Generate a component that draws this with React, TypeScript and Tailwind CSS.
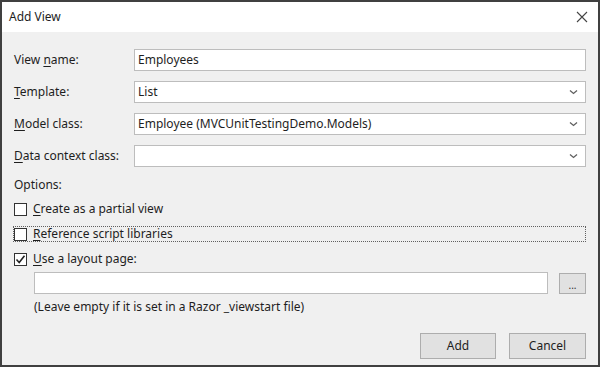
import React from 'react';

const font = { fontFamily: '"Segoe UI", "Noto Sans", "Open Sans", sans-serif' };

const Chevron = () => (
  <svg width="9" height="6" viewBox="0 0 9 6" className="text-[#606060]">
    <path d="M1 1.5 L4.5 4.5 L8 1.5" fill="none" stroke="currentColor" strokeWidth="1.3" />
  </svg>
);

const Field: React.FC<{ value?: string; select?: boolean }> = ({ value, select }) => (
  <div className="flex h-[22px] flex-1 items-center justify-between border border-[#bdbdbd] bg-white pl-[3px] pr-[7px] text-[12px] text-[#1e1e1e]">
    <span>{value}</span>
    {select && <Chevron />}
  </div>
);

const Row: React.FC<{ pre?: string; key1: string; post: string; value?: string; select?: boolean }> = ({ pre, key1, post, value, select }) => (
  <div className="flex items-center">
    <div className="w-[120px] text-[12px] text-[#1e1e1e]">
      {pre}
      <span className="underline underline-offset-2">{key1}</span>
      {post}
    </div>
    <Field value={value} select={select} />
  </div>
);

const Check: React.FC<{ checked?: boolean; key1: string; post: string; focused?: boolean }> = ({ checked, key1, post, focused }) => (
  <div className={`flex h-[16px] items-center gap-[6px] ${focused ? 'border border-dotted border-[#606060] -ml-px' : ''}`}>
    <div className="flex h-[13px] w-[13px] items-center justify-center border border-[#333] bg-white">
      {checked && (
        <svg width="11" height="11" viewBox="0 0 11 11">
          <path d="M1.5 5.5 L4.2 8.5 L9.5 1.8" fill="none" stroke="#222" strokeWidth="1.6" />
        </svg>
      )}
    </div>
    <span className="text-[12px] text-[#1e1e1e]">
      <span className="underline underline-offset-2">{key1}</span>
      {post}
    </span>
  </div>
);

export default function App() {
  return (
    <div style={font} className="flex h-[367px] w-[600px] flex-col border-2 border-[#404040] bg-[#f0f0f0]">
      <div className="flex h-[30px] items-center justify-between bg-white pl-[7px] pr-[10px]">
        <span className="text-[12px] text-[#1e1e1e]">Add View</span>
        <svg width="12" height="12" viewBox="0 0 12 12">
          <path d="M1 1 L11 11 M11 1 L1 11" stroke="#444" strokeWidth="1.1" />
        </svg>
      </div>
      <div className="flex flex-1 flex-col px-[12px] pt-[17px]">
        <div className="flex flex-col gap-[10px]">
          <Row pre="View " key1="n" post="ame:" value="Employees" />
          <Row key1="T" post="emplate:" value="List" select />
          <Row key1="M" post="odel class:" value="Employee (MVCUnitTestingDemo.Models)" select />
          <Row key1="D" post="ata context class:" select />
        </div>
        <div className="mt-[9px] text-[12px] text-[#1e1e1e]">Options:</div>
        <div className="mt-[7px] flex flex-col gap-[9px]">
          <Check key1="C" post="reate as a partial view" />
          <Check key1="R" post="eference script libraries" focused />
          <Check key1="U" post="se a layout page:" checked />
        </div>
        <div className="ml-[20px] mt-[5px] flex items-center gap-[11px]">
          <Field />
          <div className="flex h-[21px] w-[27px] items-end justify-center border border-[#adadad] bg-[#e1e1e1] pb-[3px] text-[10px] leading-none text-[#333]">
            ...
          </div>
        </div>
        <div className="ml-[20px] mt-[4px] text-[12px] text-[#1e1e1e]">
          (Leave empty if it is set in a Razor _viewstart file)
        </div>
        <div className="mt-auto mb-[6px] flex justify-end gap-[13px]">
          <div className="flex h-[26px] w-[76px] items-center justify-center border border-[#adadad] bg-[#e1e1e1] text-[12px] text-[#1e1e1e]">
            Add
          </div>
          <div className="flex h-[26px] w-[77px] items-center justify-center border border-[#adadad] bg-[#e1e1e1] text-[12px] text-[#1e1e1e]">
            Cancel
          </div>
        </div>
      </div>
    </div>
  );
}
